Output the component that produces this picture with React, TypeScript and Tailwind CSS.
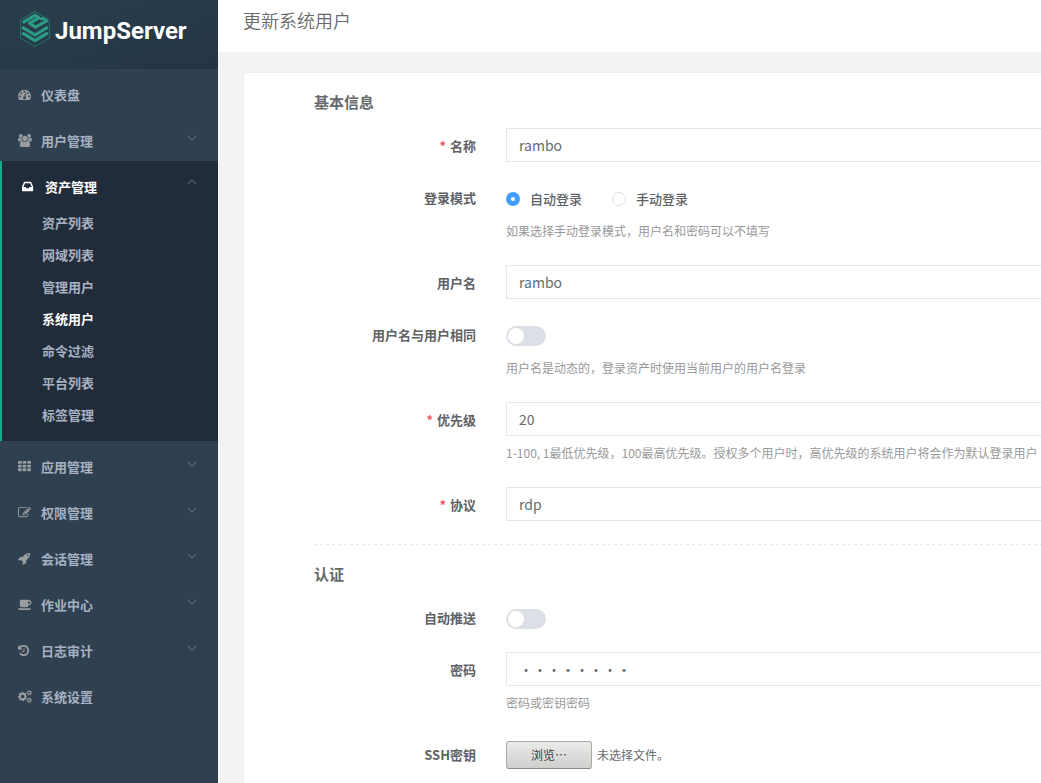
import React, { useState } from "react";

type IconProps = { name: string };

const iconPaths: Record<string, string> = {
  dashboard:
    "M384 384q0 53 -37.5 90.5t-90.5 37.5t-90.5 -37.5t-37.5 -90.5t37.5 -90.5t90.5 -37.5t90.5 37.5t37.5 90.5zM576 832q0 53 -37.5 90.5t-90.5 37.5t-90.5 -37.5t-37.5 -90.5t37.5 -90.5t90.5 -37.5t90.5 37.5t37.5 90.5zM1004 351l101 382q6 26 -7.5 48.5t-38.5 29.5t-48 -6.5t-30 -39.5l-101 -382q-60 -5 -107 -43.5t-63 -98.5q-20 -77 20 -146t117 -89t146 20t89 117q16 60 -6 117t-72 91zM1664 384q0 53 -37.5 90.5t-90.5 37.5t-90.5 -37.5t-37.5 -90.5t37.5 -90.5t90.5 -37.5t90.5 37.5t37.5 90.5zM1024 1024q0 53 -37.5 90.5t-90.5 37.5t-90.5 -37.5t-37.5 -90.5t37.5 -90.5t90.5 -37.5t90.5 37.5t37.5 90.5zM1472 832q0 53 -37.5 90.5t-90.5 37.5t-90.5 -37.5t-37.5 -90.5t37.5 -90.5t90.5 -37.5t90.5 37.5t37.5 90.5zM1792 384q0 -261 -141 -483q-19 -29 -54 -29h-1402q-35 0 -54 29q-141 221 -141 483q0 182 71 348t191 286t286 191t348 71t348 -71t286 -191t191 -286t71 -348z",
  users:
    "M593 640q-162 -5 -265 -128h-134q-82 0 -138 40.5t-56 118.5q0 353 124 353q6 0 43.5 -21t97.5 -42.5t119 -21.5q67 0 133 23q-5 -37 -5 -66q0 -139 81 -256zM1664 3q0 -120 -73 -189.5t-194 -69.5h-874q-121 0 -194 69.5t-73 189.5q0 53 3.5 103.5t14 109t26.5 108.5t43 97.5t62 81t85.5 53.5t111.5 20q10 0 43 -21.5t73 -48t107 -48t135 -21.5t135 21.5t107 48t73 48t43 21.5q61 0 111.5 -20t85.5 -53.5t62 -81t43 -97.5t26.5 -108.5t14 -109t3.5 -103.5zM640 1280q0 -106 -75 -181t-181 -75t-181 75t-75 181t75 181t181 75t181 -75t75 -181zM1344 896q0 -159 -112.5 -271.5t-271.5 -112.5t-271.5 112.5t-112.5 271.5t112.5 271.5t271.5 112.5t271.5 -112.5t112.5 -271.5zM1920 671q0 -78 -56 -118.5t-138 -40.5h-134q-103 123 -265 128q81 117 81 256q0 29 -5 66q66 -23 133 -23q59 0 119 21.5t97.5 42.5t43.5 21q124 0 124 -353zM1792 1280q0 -106 -75 -181t-181 -75t-181 75t-75 181t75 181t181 75t181 -75t75 -181z",
  inbox:
    "M1023 576h316q-1 3 -2.5 8.5t-2.5 7.5l-212 496h-708l-212 -496q-1 -3 -2.5 -8t-2.5 -8h316l95 -192h320zM1536 546v-482q0 -26 -19 -45t-45 -19h-1408q-26 0 -45 19t-19 45v482q0 62 25 123l238 552q10 25 36.5 42t52.5 17h832q26 0 52.5 -17t36.5 -42l238 -552q25 -61 25 -123z",
  edit:
    "M888 352l116 116l-152 152l-116 -116v-56h96v-96h56zM1328 1072q-16 16 -33 -1l-350 -350q-17 -17 -1 -33t33 1l350 350q17 17 1 33zM1408 478v-190q0 -119 -84.5 -203.5t-203.5 -84.5h-832q-119 0 -203.5 84.5t-84.5 203.5v832q0 119 84.5 203.5t203.5 84.5h832q63 0 117 -25q15 -7 18 -23q3 -17 -9 -29l-49 -49q-14 -14 -32 -8q-23 6 -45 6h-832q-66 0 -113 -47t-47 -113v-832q0 -66 47 -113t113 -47h832q66 0 113 47t47 113v126q0 13 9 22l64 64q15 15 35 7t20 -29zM1312 1216l288 -288l-672 -672h-288v288zM1756 1084l-92 -92l-288 288l92 92q28 28 68 28t68 -28l152 -152q28 -28 28 -68t-28 -68z",
  rocket:
    "M1440 1088q0 40 -28 68t-68 28t-68 -28t-28 -68t28 -68t68 -28t68 28t28 68zM1664 1376q0 -249 -75.5 -430.5t-253.5 -360.5q-81 -80 -195 -176l-20 -379q-2 -16 -16 -26l-384 -224q-7 -4 -16 -4q-12 0 -23 9l-64 64q-13 14 -8 32l85 276l-281 281l-276 -85q-3 -1 -9 -1q-14 0 -23 9l-64 64q-17 19 -5 39l224 384q10 14 26 16l379 20q96 114 176 195q188 187 358 258t431 71q14 0 24 -9.5t10 -22.5z",
  coffee:
    "M1664 896q0 80 -56 136t-136 56h-64v-384h64q80 0 136 56t56 136zM0 128h1792q0 -106 -75 -181t-181 -75h-1280q-106 0 -181 75t-75 181zM1856 896q0 -159 -112.5 -271.5t-271.5 -112.5h-64v-32q0 -92 -66 -158t-158 -66h-704q-92 0 -158 66t-66 158v736q0 26 19 45t45 19h1152q159 0 271.5 -112.5t112.5 -271.5z",
  history:
    "M1536 640q0 -156 -61 -298t-164 -245t-245 -164t-298 -61q-172 0 -327 72.5t-264 204.5q-7 10 -6.5 22.5t8.5 20.5l137 138q10 9 25 9q16 -2 23 -12q73 -95 179 -147t225 -52q104 0 198.5 40.5t163.5 109.5t109.5 163.5t40.5 198.5t-40.5 198.5t-109.5 163.5t-163.5 109.5t-198.5 40.5q-98 0 -188 -35.5t-160 -101.5l137 -138q31 -30 14 -69q-17 -40 -59 -40h-448q-26 0 -45 19t-19 45v448q0 42 40 59q39 17 69 -14l130 -129q107 101 244.5 156.5t284.5 55.5q156 0 298 -61t245 -164t164 -245t61 -298zM896 928v-448q0 -14 -9 -23t-23 -9h-320q-14 0 -23 9t-9 23v64q0 14 9 23t23 9h224v352q0 14 9 23t23 9h64q14 0 23 -9t9 -23z",
};

function Gear({ x, y, r }: { x: number; y: number; r: number }) {
  return (
    <g fill="none" stroke="currentColor">
      <circle cx={x} cy={y} r={r * 0.6} strokeWidth={r * 0.4} />
      <circle cx={x} cy={y} r={r * 0.88} strokeWidth={r * 0.24} pathLength={16} strokeDasharray="1 1" strokeDashoffset={0.5} />
    </g>
  );
}

function MenuIcon({ name }: IconProps) {
  return (
    <svg aria-hidden="true" viewBox="0 0 1930 1792" className="h-[13px] w-[14px] shrink-0" fill="currentColor">
      <g transform="translate(0 1536) scale(1 -1)">
        {name === "grid" &&
          [0, 512, 1024].map((y) =>
            [0, 640, 1280].map((x) => <rect key={`${x}-${y}`} x={x} y={y} width={512} height={384} rx={90} />),
          )}
        {name === "cogs" && (
          <>
            <Gear x={640} y={640} r={640} />
            <Gear x={1560} y={128} r={370} />
            <Gear x={1560} y={1152} r={370} />
          </>
        )}
        {iconPaths[name] && <path fillRule="evenodd" d={iconPaths[name]} />}
      </g>
    </svg>
  );
}

function Chevron({ up = false }: { up?: boolean }) {
  return (
    <svg aria-hidden="true" viewBox="0 0 10 6" className="h-[6px] w-[10px]" fill="none" stroke="#7b8794" strokeWidth="0.9">
      <path d={up ? "M0.7 5 5 0.9 9.3 5" : "M0.7 1 5 5.1 9.3 1"} />
    </svg>
  );
}

type Entry = { icon: string; label: string; children?: string[]; expandable?: boolean };

const menu: Entry[] = [
  { icon: "dashboard", label: "仪表盘" },
  { icon: "users", label: "用户管理", expandable: true },
  {
    icon: "inbox",
    label: "资产管理",
    expandable: true,
    children: ["资产列表", "网域列表", "管理用户", "系统用户", "命令过滤", "平台列表", "标签管理"],
  },
  { icon: "grid", label: "应用管理", expandable: true },
  { icon: "edit", label: "权限管理", expandable: true },
  { icon: "rocket", label: "会话管理", expandable: true },
  { icon: "coffee", label: "作业中心", expandable: true },
  { icon: "history", label: "日志审计", expandable: true },
  { icon: "cogs", label: "系统设置" },
];

function MenuEntry({ entry }: { entry: Entry }) {
  const open = Boolean(entry.children);
  return (
    <li className={open ? "border-l-2 border-[#19aa8d] bg-[#212c3b] pb-[10px]" : ""}>
      <a
        href="#"
        className={`flex h-[46px] items-center justify-between pr-[21px] ${open ? "pl-[20px] text-white" : "pl-[18px]"}`}
      >
        <span className="flex items-center gap-[9px] pt-[6px]">
          <span className={open ? "pb-[2px]" : "pb-[2px] text-[#999c9e]"}>
            <MenuIcon name={entry.icon} />
          </span>
          {entry.label}
        </span>
        {entry.expandable && (
          <span className={open ? "pb-1" : ""}>
            <Chevron up={open} />
          </span>
        )}
      </a>
      {entry.children && (
        <ul>
          {entry.children.map((child) => (
            <li key={child}>
              <a
                href="#"
                className={`flex h-8 items-center pl-10 ${child === "系统用户" ? "text-white" : ""}`}
              >
                {child}
              </a>
            </li>
          ))}
        </ul>
      )}
    </li>
  );
}

function Logo() {
  return (
    <svg aria-hidden="true" viewBox="0 0 30 36" className="h-9 w-[30px]" fill="none">
      <path d="M15 0.6 29.4 8.8v18.4L15 35.4 0.6 27.2V8.8z" stroke="#24776b" />
      <g stroke="#2a9d84" strokeWidth="3.2">
        <path d="M2.600 11.600 15 4.400 19 6.800 9.500 12.200 15.500 16.200 27.400 9.400" strokeLinejoin="round" />
        <path d="M20 8.500 22.500 7.200 27.400 10" strokeWidth="2.400" />
        <path d="M2.200 16.200 15 24 27.800 16.200" />
        <path d="M2.200 21.800 15 29.600 27.800 21.800" />
      </g>
    </svg>
  );
}

function Row({
  id,
  label,
  required,
  help,
  short = false,
  children,
}: {
  id?: string;
  label: string;
  required?: boolean;
  help?: string;
  short?: boolean;
  children: React.ReactNode;
}) {
  return (
    <div className="grid grid-cols-[162px_minmax(0,1fr)] gap-x-[30px]">
      <div className={`flex items-center justify-end ${short ? "h-[30px] pb-[2px]" : "h-[34px] pt-[2px]"}`}>
        <label htmlFor={id} className="whitespace-nowrap text-[13px] font-bold text-[#606266]">
          {required && <span className="mr-1 text-[#ed5565]">*</span>}
          {label}
        </label>
      </div>
      <div className={`flex items-center ${short ? "h-[30px]" : "h-[34px]"}`}>{children}</div>
      {help && <p className="col-start-2 whitespace-nowrap pt-[5px] text-xs leading-6 text-[#999]">{help}</p>}
    </div>
  );
}

function TextInput({ id, value, type = "text" }: { id: string; value: string; type?: string }) {
  return (
    <input
      id={id}
      type={type}
      defaultValue={value}
      className="h-[34px] w-full border border-r-0 border-[#e5e6e7] bg-white px-3 text-sm text-[#676a6c] outline-none"
    />
  );
}

function Switch({ id }: { id: string }) {
  const [on, setOn] = useState(false);
  return (
    <button
      id={id}
      type="button"
      role="switch"
      aria-checked={on}
      onClick={() => setOn(!on)}
      className={`flex h-5 w-10 items-center rounded-full px-[2px] ${on ? "justify-end bg-[#409eff]" : "bg-[#dcdfe6]"}`}
    >
      <span className="size-4 rounded-full bg-white" />
    </button>
  );
}

function Radio({ label, checked }: { label: string; checked?: boolean }) {
  return (
    <label className="flex items-center gap-[10px] text-[13px] font-medium text-[#606266]">
      <input
        type="radio"
        name="login-mode"
        defaultChecked={checked}
        className="size-[14px] appearance-none rounded-full border border-[#dcdfe6] bg-white checked:border-[5px] checked:border-[#409eff]"
      />
      {label}
    </label>
  );
}

export default function App() {
  return (
    <div className="flex min-h-screen overflow-hidden bg-[#f3f3f4] font-['Noto_Sans_CJK_SC',sans-serif]">
      <aside className="w-[218px] shrink-0 bg-[#2f4050] text-[13px] font-semibold text-[#a7b1c2]">
        <header className="flex h-[69px] items-start gap-[5px] bg-linear-to-br from-[#293e4d] to-[#243544] pl-5 pt-[11px]">
          <Logo />
          <span className="font-[Roboto,sans-serif] text-2xl font-bold leading-10 text-white">JumpServer</span>
        </header>
        <nav>
          <ul>
            {menu.map((entry) => (
              <MenuEntry key={entry.label} entry={entry} />
            ))}
          </ul>
        </nav>
      </aside>
      <main className="min-w-0 flex-1">
        <div className="flex h-[52px] items-start bg-white pl-[25px] pt-[7px]">
          <h1 className="text-lg font-[350] leading-[27px] text-[#676a6c]">更新系统用户</h1>
        </div>
        <form className="ml-[25px] mt-5 rounded-tl border-l border-t border-[#ebeef5] bg-white pl-[70px]">
          <h2 className="flex h-[55px] items-center pt-1 text-[15px] font-bold text-[#676a6c]">基本信息</h2>
          <div className="flex flex-col gap-[22px] pb-[23px]">
            <Row id="name" label="名称" required>
              <TextInput id="name" value="rambo" />
            </Row>
            <Row label="登录模式" help="如果选择手动登录模式，用户名和密码可以不填写" short>
              <div className="flex gap-[30px]">
                <Radio label="自动登录" checked />
                <Radio label="手动登录" />
              </div>
            </Row>
            <Row id="username" label="用户名">
              <TextInput id="username" value="rambo" />
            </Row>
            <Row
              id="same"
              label="用户名与用户相同"
              help="用户名是动态的，登录资产时使用当前用户的用户名登录"
              short
            >
              <Switch id="same" />
            </Row>
            <Row
              id="priority"
              label="优先级"
              required
              help="1-100, 1最低优先级，100最高优先级。授权多个用户时，高优先级的系统用户将会作为默认登录用户"
            >
              <TextInput id="priority" value="20" />
            </Row>
            <Row id="protocol" label="协议" required>
              <TextInput id="protocol" value="rdp" />
            </Row>
          </div>
          <hr className="h-px border-0 bg-[repeating-linear-gradient(90deg,#e7eaec_0_3px,transparent_3px_6px)]" />
          <h2 className="flex h-[59px] items-center text-[15px] font-bold text-[#676a6c]">认证</h2>
          <div className="flex flex-col gap-[18px] pb-10">
            <Row id="push" label="自动推送" short>
              <Switch id="push" />
            </Row>
            <Row id="password" label="密码" help="密码或密钥密码">
              <TextInput id="password" type="password" value="password" />
            </Row>
            <div className="pt-1">
              <Row id="ssh" label="SSH密钥">
                <div className="flex items-center gap-[5px] pt-[2px] text-xs">
                  <label
                    htmlFor="ssh"
                    className="flex h-7 w-[86px] items-center justify-center rounded-[3px] border border-[#a9a9a5] border-b-[#888884] bg-linear-to-b from-[#ebebea] to-[#cfcfcd] text-[#3c3c3c]"
                  >
                    浏览⋯
                  </label>
                  <input id="ssh" type="file" className="sr-only" />
                  <span className="text-[#676a6c]">未选择文件。</span>
                </div>
              </Row>
            </div>
          </div>
        </form>
      </main>
    </div>
  );
}
